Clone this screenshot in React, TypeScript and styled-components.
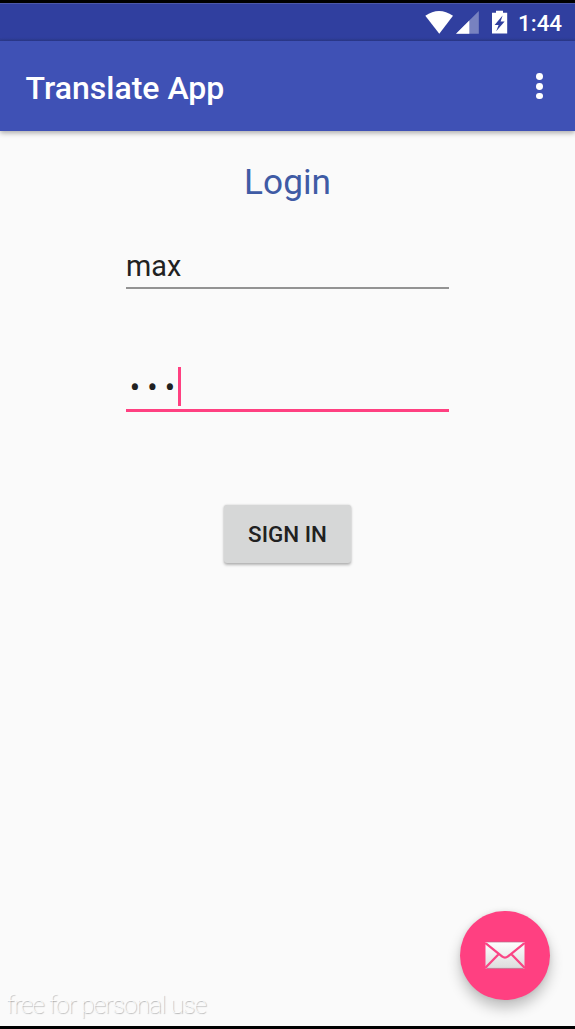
import React from "react";
import styled, { createGlobalStyle } from "styled-components";

const GlobalStyle = createGlobalStyle`
  *, *::before, *::after { box-sizing: border-box; }
  body {
    margin: 0;
    background: #000;
    font-family: Roboto, "Liberation Sans", sans-serif;
    overflow: hidden;
  }
`;

const Screen = styled.div`
  width: 575px;
  height: 1029px;
  display: flex;
  flex-direction: column;
  border-top: 3px solid #000;
  border-bottom: 3px solid #000;
  background: #fafafa;
  position: relative;
`;

const StatusBar = styled.div`
  height: 38px;
  flex: none;
  display: flex;
  align-items: center;
  padding-left: 424px;
  background: linear-gradient(#5a65ae 0, #303f9f 1.5px, #303f9f 35px, #2c3a8c 38px);
  color: #fff;
`;

const StatusIcons = styled.svg`
  display: block;
  flex: none;
`;

const Clock = styled.span`
  font-size: 22.4px;
  font-weight: 500;
  line-height: 38px;
  margin-left: 8px;
  padding-top: 1px;
`;

const AppBar = styled.header`
  height: 90px;
  flex: none;
  display: flex;
  align-items: center;
  justify-content: space-between;
  padding: 3px 31.8px 0 25.6px;
  background: #3f51b5;
  color: #fff;
  box-shadow: 0 2px 5px rgba(0, 0, 0, 0.32);
`;

const Title = styled.h1`
  margin: 0;
  font-size: 32px;
  font-weight: 500;
  line-height: 40px;
`;

const MenuButton = styled.button`
  border: 0;
  padding: 0;
  background: none;
  display: flex;
  flex-direction: column;
  gap: 2.8px;
  margin-bottom: 2.4px;
`;

const MenuDot = styled.span`
  width: 6.8px;
  height: 6.8px;
  border-radius: 50%;
  background: #fff;
`;

const Form = styled.main`
  flex: 1;
  display: flex;
  flex-direction: column;
  align-items: center;
`;

const Heading = styled.h2`
  margin: 30px 0 0;
  font-size: 35.2px;
  font-weight: 400;
  line-height: 42px;
  color: #3f5ba5;
`;

const Field = styled.div<{ $active?: boolean }>`
  width: 323px;
  height: ${(p) => (p.$active ? "45px" : "43px")};
  margin-top: ${(p) => (p.$active ? "78px" : "43px")};
  display: flex;
  align-items: flex-start;
  border-bottom: ${(p) => (p.$active ? "3px solid #ff4081" : "2px solid #939393")};
  color: #212121;
  font-size: 28.8px;
  line-height: 40px;
`;

const Masked = styled.span`
  font-size: 30.6px;
  letter-spacing: 7.1px;
  margin-left: 3.8px;
  width: 48.2px;
  padding-top: 1px;
  white-space: nowrap;
`;

const Cursor = styled.span`
  width: 3px;
  height: 39px;
  background: #ff4081;
`;

const SignIn = styled.button`
  width: 127.5px;
  height: 57.5px;
  margin-top: 93px;
  padding: 0;
  border: 0;
  border-radius: 3px;
  background: #d6d7d7;
  color: #212121;
  font-family: inherit;
  font-size: 22.4px;
  font-weight: 500;
  white-space: nowrap;
  box-shadow: 0 1.5px 3px rgba(0, 0, 0, 0.28), 0 0 2px rgba(0, 0, 0, 0.1);
`;

const MailButton = styled.button`
  position: absolute;
  right: 25.5px;
  bottom: 26px;
  width: 89.5px;
  height: 89.5px;
  border: 0;
  padding: 0;
  border-radius: 50%;
  background: #ff4081;
  display: flex;
  align-items: center;
  justify-content: center;
  box-shadow: 0 8px 14px rgba(0, 0, 0, 0.24), 0 0 5px rgba(0, 0, 0, 0.08);
`;

const Watermark = styled.span`
  position: absolute;
  left: 6.5px;
  bottom: 5px;
  font-size: 24.6px;
  font-weight: 100;
  letter-spacing: -0.85px;
  line-height: 32px;
  color: #fff;
  white-space: nowrap;
  text-shadow: 1px 1px 1px rgba(0, 0, 0, 0.35);
`;

export default function App() {
  return (
    <>
      <GlobalStyle />
      <Screen>
        <StatusBar>
          <StatusIcons width="86" height="38" viewBox="424 3 86 38">
            <path d="M425.3 15.8Q439 6 453 15.8L439.3 33.7Z" fill="#fff" />
            <path d="M478.8 11V33.8H456Z" fill="#fff" opacity=".35" />
            <path d="M469.3 20.5V33.8H456Z" fill="#fff" />
            <path
              fillRule="evenodd"
              d="M496 10.7h7v2.1h4.2V33.6H492V12.8h4ZM502.6 15.6l-8 9.4h4l-2.4 6.2 8.4-9.6h-4Z"
              fill="#fff"
            />
          </StatusIcons>
          <Clock>1:44</Clock>
        </StatusBar>
        <AppBar>
          <Title>Translate App</Title>
          <MenuButton aria-label="More options">
            <MenuDot />
            <MenuDot />
            <MenuDot />
          </MenuButton>
        </AppBar>
        <Form>
          <Heading>Login</Heading>
          <Field>max</Field>
          <Field $active>
            <Masked>•••</Masked>
            <Cursor />
          </Field>
          <SignIn>SIGN IN</SignIn>
        </Form>
        <MailButton aria-label="Compose mail">
          <svg width="42" height="30" viewBox="0 0 42 30">
            <defs>
              <linearGradient id="paper" x1="0" y1="0" x2="0" y2="1">
                <stop offset="0" stopColor="#fff" />
                <stop offset="1" stopColor="#dcdcdc" />
              </linearGradient>
            </defs>
            <rect x="1.5" y="2" width="39" height="26.5" fill="url(#paper)" />
            <path
              d="M1.2 2.8L18 16.4Q21 18.8 24 16.4L40.8 2.8M1.2 28L14.8 14M40.8 28L27.2 14"
              fill="none"
              stroke="#fa4585"
              strokeWidth="2.3"
            />
            <path d="M3 28.4H39M3 2H39" stroke="#b66f87" strokeWidth=".7" />
          </svg>
        </MailButton>
        <Watermark>free for personal use</Watermark>
      </Screen>
    </>
  );
}
